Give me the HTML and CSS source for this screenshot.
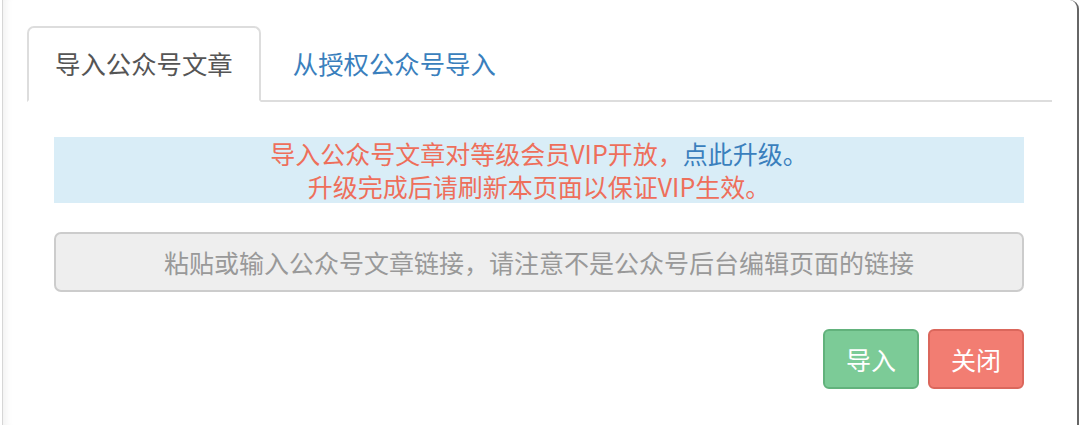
FILE: index.html
```html
<!DOCTYPE html>
<html lang="zh-CN">
<head>
    <meta charset="UTF-8">
    <meta name="viewport" content="width=device-width, initial-scale=1.0">
    <title>导入公众号文章</title>
    <link rel="stylesheet" href="styles.css">
</head>
<body>

<div class="modal">
    <ul class="nav-tabs">
        <li class="active"><a href="#">导入公众号文章</a></li>
        <li><a href="#">从授权公众号导入</a></li>
    </ul>

    <div class="tab-body">
        <div class="alert">
            导入公众号文章对等级会员VIP开放，<a href="#">点此升级。</a><br>
            升级完成后请刷新本页面以保证VIP生效。
        </div>

        <input type="text" class="link-input" placeholder="粘贴或输入公众号文章链接，请注意不是公众号后台编辑页面的链接" disabled>

        <div class="actions">
            <button class="btn btn-ok">导入</button>
            <button class="btn btn-close">关闭</button>
        </div>
    </div>
</div>

</body>
</html>
```

FILE: styles.css
```css
body {
    margin: 0;
    padding: 0;
    background: #fff;
    font-family: "Noto Sans CJK SC", "Noto Sans", sans-serif;
}

.modal {
    box-sizing: border-box;
    height: 425px;
    margin: 0 1px 0 2px;
    padding: 26px 25px 0 24px;
    border-left: 1px solid #d6d6d6;
    border-right: 2px solid #666;
    border-top-right-radius: 9px;
    box-shadow: inset 9px 0 8px -7px rgba(0, 0, 0, 0.07);
    background: #fff;
}

.nav-tabs {
    display: flex;
    list-style: none;
    margin: 0;
    padding: 0;
    border-bottom: 2px solid #ddd;
}

.nav-tabs li {
    margin: 0 4px -2px 0;
}

.nav-tabs a {
    display: block;
    padding: 17px 26px 19px;
    font-size: 25.4px;
    line-height: 36px;
    color: #3a7fbd;
    text-decoration: none;
    border: 2px solid transparent;
    border-radius: 7px 7px 0 0;
}

.nav-tabs .active a {
    color: #555;
    background: #fff;
    border-color: #ddd;
    border-bottom-color: transparent;
}

.tab-body {
    padding: 35px 28px 0 27px;
}

.alert {
    background: #d9edf7;
    color: #ee6f5b;
    text-align: center;
    font-size: 25px;
    line-height: 33px;
}

.alert a {
    color: #3a7fbd;
    text-decoration: none;
}

.link-input {
    display: block;
    box-sizing: border-box;
    width: 100%;
    height: 60px;
    margin-top: 29px;
    padding: 0 16px;
    border: 2px solid #ccc;
    border-radius: 7px;
    background: #eee;
    font-family: inherit;
    font-size: 25px;
    text-align: center;
}

.link-input::placeholder {
    color: #999;
}

.actions {
    display: flex;
    justify-content: flex-end;
    gap: 9px;
    margin-top: 37px;
}

.btn {
    width: 96px;
    height: 60px;
    border-radius: 6px;
    border: 2px solid;
    color: #fff;
    font-family: inherit;
    font-size: 25px;
    padding: 0;
}

.btn-ok {
    background: #7ccb97;
    border-color: #62b27c;
}

.btn-close {
    background: #f27d72;
    border-color: #db675c;
}
```
